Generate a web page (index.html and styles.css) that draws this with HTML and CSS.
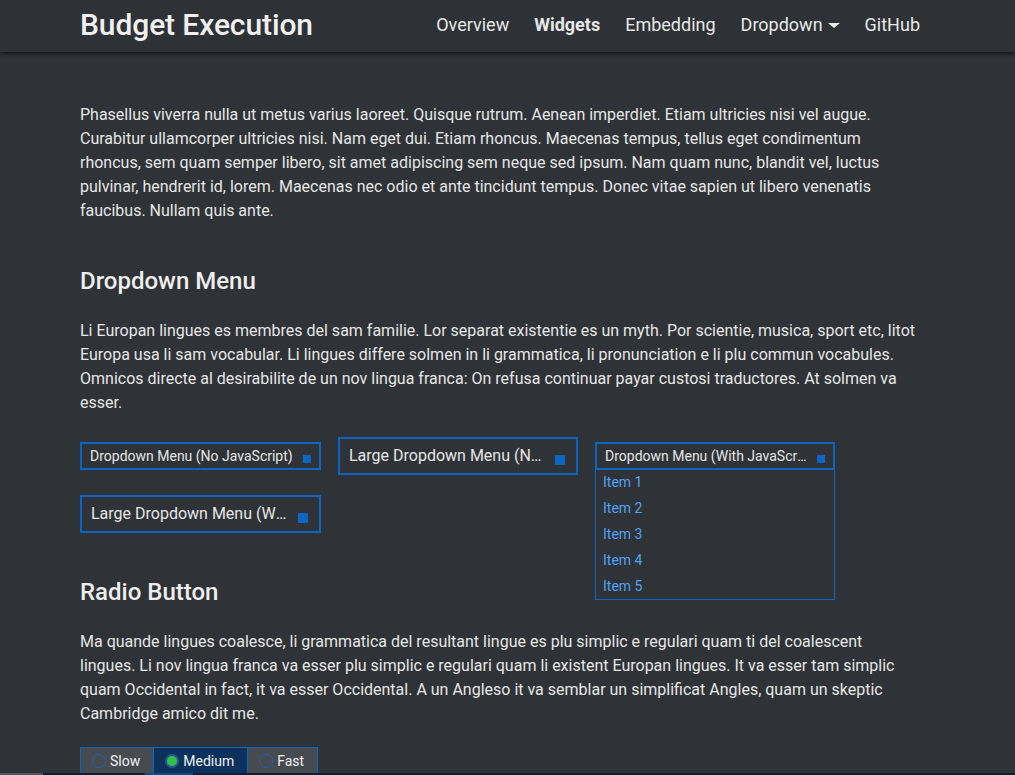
FILE: index.html
```html
<!DOCTYPE html>
<html lang="en">
<head>
<meta charset="utf-8">
<title>Budget Execution</title>
<link rel="stylesheet" href="styles.css">
</head>
<body>
<header class="navbar">
  <div class="nav-inner">
    <a class="brand" href="#">Budget Execution</a>
    <nav class="nav-links">
      <a href="#">Overview</a>
      <a href="#" class="active">Widgets</a>
      <a href="#">Embedding</a>
      <a href="#" class="has-caret">Dropdown<span class="caret"></span></a>
      <a href="#">GitHub</a>
    </nav>
  </div>
</header>
<main class="container">
  <p class="lead">Phasellus viverra nulla ut metus varius laoreet. Quisque rutrum. Aenean imperdiet. Etiam ultricies nisi vel augue. Curabitur ullamcorper ultricies nisi. Nam eget dui. Etiam rhoncus. Maecenas tempus, tellus eget condimentum rhoncus, sem quam semper libero, sit amet adipiscing sem neque sed ipsum. Nam quam nunc, blandit vel, luctus pulvinar, hendrerit id, lorem. Maecenas nec odio et ante tincidunt tempus. Donec vitae sapien ut libero venenatis faucibus. Nullam quis ante.</p>

  <h2>Dropdown Menu</h2>
  <p>Li Europan lingues es membres del sam familie. Lor separat existentie es un myth. Por scientie, musica, sport etc, litot Europa usa li sam vocabular. Li lingues differe solmen in li grammatica, li pronunciation e li plu commun vocabules. Omnicos directe al desirabilite de un nov lingua franca: On refusa continuar payar custosi traductores. At solmen va esser.</p>

  <div class="dd-row">
    <div class="dd dd-sm"><span class="dd-label">Dropdown Menu (No JavaScript)</span><span class="dd-sq"></span></div>
    <div class="dd dd-lg dd-narrow"><span class="dd-label">Large Dropdown Menu (No JavaScript)</span><span class="dd-sq"></span></div>
    <div class="dd-wrap">
      <div class="dd dd-sm dd-open"><span class="dd-label">Dropdown Menu (With JavaScript)</span><span class="dd-sq"></span></div>
      <ul class="dd-menu">
        <li>Item 1</li>
        <li>Item 2</li>
        <li>Item 3</li>
        <li>Item 4</li>
        <li>Item 5</li>
      </ul>
    </div>
    <div class="dd dd-lg"><span class="dd-label">Large Dropdown Menu (With JavaScript)</span><span class="dd-sq"></span></div>
  </div>

  <h2 class="after-widgets">Radio Button</h2>
  <p>Ma quande lingues coalesce, li grammatica del resultant lingue es plu simplic e regulari quam ti del coalescent lingues. Li nov lingua franca va esser plu simplic e regulari quam li existent Europan lingues. It va esser tam simplic quam Occidental in fact, it va esser Occidental. A un Angleso it va semblar un simplificat Angles, quam un skeptic Cambridge amico dit me.</p>

  <div class="radio-group">
    <label class="radio"><span class="dot"></span>Slow</label>
    <label class="radio checked"><span class="dot"></span>Medium</label>
    <label class="radio"><span class="dot"></span>Fast</label>
  </div>
</main>
<div class="bottom-strip"><span class="seg-gray"></span><span class="seg-blue"></span></div>
</body>
</html>
```
FILE: styles.css
```css
html, body {
  margin: 0;
  padding: 0;
}
body {
  background: #2f3236;
  color: #e6e6e6;
  font-family: Roboto, "Liberation Sans", Arial, sans-serif;
  font-size: 16px;
  line-height: 24px;
  overflow: hidden;
  height: 775px;
}
a { text-decoration: none; color: inherit; }

.navbar {
  background: #2e3135;
  height: 52px;
  box-shadow: 0 2px 4px rgba(0,0,0,0.55);
  position: relative;
  z-index: 2;
}
.nav-inner {
  width: 840px;
  margin-left: 80px;
  height: 52px;
  box-sizing: border-box;
  padding-bottom: 2px;
  display: flex;
  align-items: center;
  justify-content: space-between;
}
.brand {
  font-size: 30px;
  font-weight: 500;
  color: #f0f0f0;
  line-height: 48px;
  letter-spacing: -0.1px;
}
.nav-links {
  display: flex;
  align-items: center;
  gap: 25px;
  font-size: 18px;
  color: #e8e8e8;
}
.nav-links .active { font-weight: 700; }
.has-caret { display: flex; align-items: center; }
.caret {
  display: inline-block;
  margin-left: 5px;
  border-left: 6px solid transparent;
  border-right: 6px solid transparent;
  border-top: 5px solid #e8e8e8;
}

.container {
  width: 840px;
  margin-left: 80px;
  padding-top: 51px;
}
p { margin: 0; }
h2 {
  font-size: 24px;
  font-weight: 500;
  line-height: 30px;
  margin: 43px 0 23px;
  color: #eeeeee;
}
h2.after-widgets { margin-top: 44px; }

.dd-row {
  display: flex;
  flex-wrap: wrap;
  align-items: center;
  column-gap: 17px;
  row-gap: 20px;
  margin-top: 22px;
}
.dd {
  display: flex;
  align-items: center;
  box-sizing: border-box;
  width: 241px;
  border: 2px solid #0a66c2;
  gap: 10px;
}
.dd-narrow { width: 240px; }
.dd-sm {
  height: 28px;
  font-size: 14px;
  padding: 0 8px;
}
.dd-lg {
  height: 38px;
  font-size: 16px;
  padding: 0 11px 0 9px;
}
.dd-label {
  flex: 1;
  min-width: 0;
  overflow: hidden;
  white-space: nowrap;
  text-overflow: ellipsis;
}
.dd-sq {
  flex: none;
  width: 8px;
  height: 8px;
  margin-top: 6px;
  background: #0a66c2;
}
.dd-lg .dd-sq { width: 10px; height: 10px; margin-top: 7px; }
.dd-wrap {
  position: relative;
  width: 240px;
}
.dd-wrap .dd { width: 240px; }
.dd-menu {
  position: absolute;
  left: 0;
  top: 100%;
  width: 240px;
  box-sizing: border-box;
  margin: 0;
  padding: 0;
  list-style: none;
  border: 1px solid #0a66c2;
  border-top: none;
  background: #2f3236;
  font-size: 14px;
  line-height: 26px;
  color: #4ea3f5;
}
.dd-menu li { padding-left: 7px; }
.dd-menu li:first-child { margin-top: -1px; }

.radio-group {
  display: inline-flex;
  margin-top: 21px;
  border: 1px solid #0a66c2;
  font-size: 14px;
  line-height: 26px;
}
.radio {
  display: flex;
  align-items: center;
  gap: 4px;
  background: #474b50;
  padding: 0 13px 0 11px;
  color: #f0f0f0;
}
.radio + .radio { border-left: 1px solid #0a66c2; }
.radio.checked { background: #0b315c; }
.dot {
  width: 14px;
  height: 14px;
  box-sizing: border-box;
  border: 1.5px solid #1a63b3;
  border-radius: 50%;
}
.checked .dot {
  background: #2fc24a;
  border: 2px solid #2a5788;
}

.bottom-strip {
  position: fixed;
  left: 0;
  right: 0;
  bottom: 0;
  height: 2px;
  background: #0b2034;
}
.seg-gray {
  position: absolute;
  left: 0;
  width: 43px;
  height: 2px;
  background: #4d5660;
}
.seg-blue {
  position: absolute;
  left: 145px;
  width: 48px;
  height: 2px;
  background: #0b4c8f;
}
```
